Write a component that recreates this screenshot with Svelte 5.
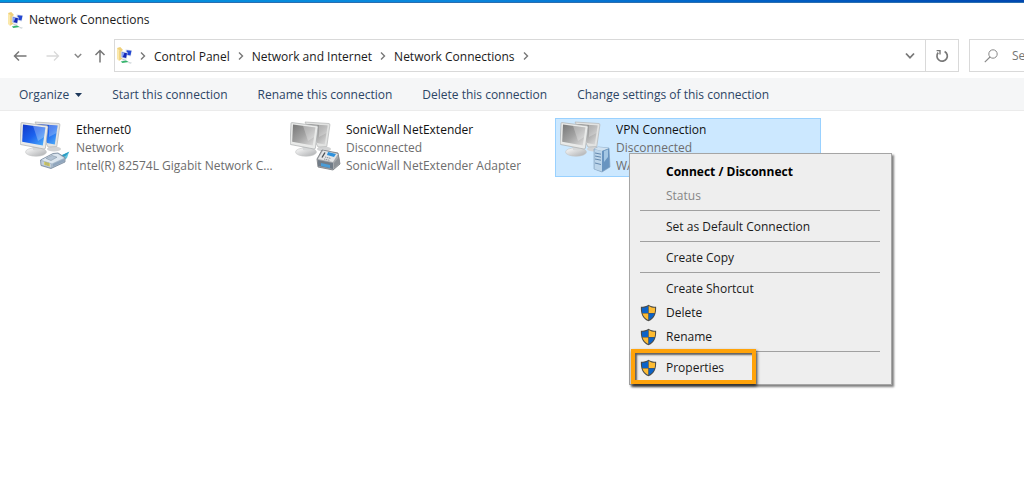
<script>
    const crumbs = ['Control Panel', 'Network and Internet', 'Network Connections'];

    const commands = [
        'Start this connection',
        'Rename this connection',
        'Delete this connection',
        'Change settings of this connection'
    ];

    const connections = [
        { name: 'Ethernet0', status: 'Network', device: 'Intel(R) 82574L Gigabit Network Connection', kind: 'plug', online: true },
        { name: 'SonicWall NetExtender', status: 'Disconnected', device: 'SonicWall NetExtender Adapter', kind: 'phone', online: false },
        { name: 'VPN Connection', status: 'Disconnected', device: 'WAN Miniport', kind: 'server', online: false }
    ];

    const menu = [
        { label: 'Connect / Disconnect', bold: true },
        { label: 'Status', disabled: true },
        { separator: true },
        { label: 'Set as Default Connection' },
        { separator: true },
        { label: 'Create Copy' },
        { separator: true },
        { label: 'Create Shortcut' },
        { label: 'Delete', shield: true },
        { label: 'Rename', shield: true },
        { separator: true },
        { label: 'Properties', shield: true, marked: true }
    ];

    let selected = $state('VPN Connection');
</script>

{#snippet folderIcon()}
    <svg class="folder-icon" viewBox="0 0 16 16" aria-hidden="true">
        <path d="M1 1 L4 0 L6 2 L6 11 L3 13 L1 11Z" fill="#efd07a" />
        <path d="M1 1 L3 3 L3 13 L1 11Z" fill="#fbe9ae" />
        <path d="M9 2 L15 3 L14 9 L9 8Z" fill="#dde3ee" />
        <path d="M10 3 L14.6 3.6 L13.6 8 L10 7.4Z" fill="#2447d2" />
        <path d="M4.5 4 L11 5 L10 11.4 L4.5 10Z" fill="#d6ddeb" />
        <path d="M5.5 5 L10.4 5.8 L9.5 10.4 L5.5 9.4Z" fill="#1327b8" />
        <path d="M5.5 5 L8 5.4 L6.4 9.4 L5.5 9.2Z" fill="#8aa4f4" />
        <path d="M6 11 L10 12 L9 13 L6 12.4Z" fill="#c3cad2" />
        <path d="M4.5 13.6 L9.5 12.8 L12 14.2 L6 15Z" fill="#35b46c" />
        <path d="M12 14.4 L15 14.8 L14 15.5 L11.5 15Z" fill="#b9c2c9" />
    </svg>
{/snippet}

{#snippet chevron()}
    <svg class="chevron" viewBox="0 0 6 10" aria-hidden="true">
        <path d="M1 1.5 L4.5 5 L1 8.5" fill="none" stroke="#777" stroke-width="1.4" />
    </svg>
{/snippet}

{#snippet shieldIcon()}
    <svg class="shield" viewBox="0 0 16 17" aria-hidden="true">
        <path d="M8 .6 C6 2 3.6 2.6 .8 2.6 C.6 9 2 13.5 8 16.4 C14 13.5 15.4 9 15.2 2.6 C12.4 2.6 10 2 8 .6Z" fill="#4c4c48" />
        <path d="M7.8 1.8 C6 3 4 3.5 1.8 3.6 C1.7 5.5 1.8 7.2 2.2 8.6 L7.8 8.6Z" fill="#0c63c8" />
        <path d="M8.2 1.8 C10 3 12 3.5 14.2 3.6 C14.3 5.5 14.2 7.2 13.8 8.6 L8.2 8.6Z" fill="#fdbb32" />
        <path d="M2.3 9 L7.8 9 L7.8 15.2 C4.8 13.7 3.2 11.8 2.3 9Z" fill="#fdbb32" />
        <path d="M13.7 9 L8.2 9 L8.2 15.2 C11.2 13.7 12.8 11.8 13.7 9Z" fill="#0c63c8" />
    </svg>
{/snippet}

{#snippet connectionIcon(kind, online)}
    <svg class="connection-icon" viewBox="0 0 52 54" aria-hidden="true">
        <defs>
            <linearGradient id="screen-{kind}" x1="0" y1="0" x2="1" y2="1">
                <stop offset="0" stop-color={online ? '#1238c8' : '#777777'} />
                <stop offset=".5" stop-color={online ? '#1c62ee' : '#a2a2a2'} />
                <stop offset="1" stop-color={online ? '#52b4fa' : '#e0e0e0'} />
            </linearGradient>
            <linearGradient id="base-{kind}" x1="0" y1="0" x2="1" y2="1">
                <stop offset="0" stop-color="#ffffff" />
                <stop offset="1" stop-color="#a9abad" />
            </linearGradient>
        </defs>
        <ellipse cx="34" cy="29" rx="7" ry="2.5" fill="#d2d3d4" />
        <path d="M15 2 L39 3.5 Q40 3.6 39.9 5 L36.8 26.5 L28 27Z" fill="#e2e3e2" stroke="#b3b5b5" stroke-width=".7" />
        <path d="M17 4 L37.6 5.5 L34.8 24.5 L27 23Z" fill="url(#screen-{kind})" />
        <path d="M29 5 L37.6 5.5 L36.6 13 L29 17Z" fill="#ffffff" opacity=".25" />
        <path d="M13 26 L21 28 L21 32 L12 31Z" fill="#babdbf" />
        <ellipse cx="16" cy="32" rx="10.5" ry="4.2" fill="url(#base-{kind})" stroke="#c2c4c5" stroke-width=".6" />
        <path d="M13 26 L21 28 L20 31 L13 30Z" fill="#d5d7d8" />
        <path d="M2 2.6 L27 5.8 Q28.2 6 28 7.2 L25.4 28 Q25.2 29.2 24 29 L1 24.6 Q0 24.4 .1 23.4 L1 3.6 Q1 2.5 2 2.6Z" fill="#e9eae9" stroke="#a9acad" stroke-width=".7" />
        <path d="M3 4.5 L25.4 7.5 L22.8 25.4 L2.2 21.8Z" fill="url(#screen-{kind})" />
        <path d="M13 5.8 L25.4 7.5 L24.1 17 L18 21 Z" fill="#ffffff" opacity=".28" />
        {#if kind === 'plug'}
            <path d="M38 37 L49 32 L47 38 L42 42Z" fill="#63c4de" />
            <path d="M40 36 L49.5 31.6 L46 35.5 L41 38Z" fill="#2a9cc4" />
            <path d="M20.5 40 L33 33.5 L38 33 L45 37.5 L45 42 L31 48.5 L21 45.5Z" fill="#a7b8c9" stroke="#75869a" stroke-width=".8" />
            <path d="M21.5 40 L33 34.2 L37.6 33.8 L44 38 L32 43.4Z" fill="#dce6ef" />
            <path d="M26 38.4 L32 35.4 L37 37.2 L31 40.6Z" fill="#b3c3d4" stroke="#7c8e9f" stroke-width=".5" />
            <path d="M33 44 L44 39 L44 41.5 L33 46.6Z" fill="#8fa5bd" />
            <path d="M21.4 41 L31 44 L31 47.6 L21.6 44.8Z" fill="#c3cfdb" />
            <path d="M24 41.4 L30 43.2 L30 46.6 L24 44.8Z" fill="#d5cf72" />
            <path d="M26 42 V45.4 M28 42.6 V46" stroke="#8b8b58" stroke-width=".6" />
        {:else if kind === 'phone'}
            <path d="M27 39 L32 30 L48 33 L50 44 L43 50 L28 47Z" fill="#a6a9ad" stroke="#73777c" stroke-width=".8" />
            <path d="M28 39 L33 30.5 L48 34 L43 42Z" fill="#e4e5e6" />
            <path d="M28 40 L43 43 L43 49 L28 46Z" fill="#707b87" />
            <path d="M31 43 L40 45 L40 48 L31 46Z" fill="#4a9dd8" />
            <path d="M38 32 L46 34 L44 37 L37 35Z" fill="#2d91dc" />
            <path d="M32 37.5 L35 32.5" stroke="#4b4f54" stroke-width="1.4" />
            <path d="M35 37 L41 38.5 M34 39 L40 40.5" stroke="#8c9197" stroke-width="1" stroke-dasharray="1.4 .7" />
            <path d="M44 43 L49 37 L50 43 L44 48Z" fill="#8d9196" />
        {:else}
            <path d="M34 29 L38 27 L49 28 L50 47 L42 52 L34 49Z" fill="#8aaccb" stroke="#7d9cba" stroke-width=".6" />
            <path d="M34 29 L38 27 L49 28 L42 31Z" fill="#d0e2f1" />
            <path d="M42 31 L49 28.5 L49.5 47 L42 51.5Z" fill="#6894c0" />
            <path d="M44 31 L48 29.5 L48 37 L44 42Z" fill="#b3d3ec" opacity=".8" />
            <path d="M34.5 29.5 L42 31 L42 51.5 L34.5 49Z" fill="#bcd5ea" />
            <path d="M35 33 L41 34.2 M35 36 L41 37.2 M35 39 L41 40.2 M35 43 L41 44.5" stroke="#6489ae" stroke-width="1" />
        {/if}
    </svg>
{/snippet}

<div class="window">
    <!-- Title bar -->
    <header class="title-bar">
        {@render folderIcon()}
        <span>Network Connections</span>
    </header>

    <!-- Navigation row -->
    <nav class="nav-row">
        <div class="nav-buttons">
            <button aria-label="Back">
                <svg width="14" height="14" viewBox="0 0 14 14"><path d="M13.5 7 H1.5 M6 2.5 L1.5 7 L6 11.5" fill="none" stroke="#777" stroke-width="1.5" /></svg>
            </button>
            <button class="forward" aria-label="Forward">
                <svg width="14" height="14" viewBox="0 0 14 14"><path d="M.5 7 H12.5 M8 2.5 L12.5 7 L8 11.5" fill="none" stroke="#d9d9d9" stroke-width="1.3" /></svg>
            </button>
            <button class="recent" aria-label="Recent locations">
                <svg width="8" height="6" viewBox="0 0 8 6"><path d="M.8 1 L4 4.2 L7.2 1" fill="none" stroke="#888" stroke-width="1.5" /></svg>
            </button>
            <button class="up" aria-label="Up">
                <svg width="12" height="14" viewBox="0 0 12 14"><path d="M6 13.5 V1.5 M1.5 6 L6 1.5 L10.5 6" fill="none" stroke="#777" stroke-width="1.5" /></svg>
            </button>
        </div>

        <div class="address">
            {@render folderIcon()}
            <div class="crumbs">
                {@render chevron()}
                {#each crumbs as crumb}
                    <a href="#top">{crumb}</a>
                    {@render chevron()}
                {/each}
            </div>
            <button class="history" aria-label="Previous locations">
                <svg width="10" height="8" viewBox="0 0 10 8"><path d="M1 1.5 L5 5.8 L9 1.5" fill="none" stroke="#777" stroke-width="1.8" /></svg>
            </button>
            <button class="refresh" aria-label="Refresh">
                <svg width="14" height="14" viewBox="0 0 14 14">
                    <path d="M9.6 2.4 A5.2 5.2 0 1 1 3.2 3.6" fill="none" stroke="#777" stroke-width="1.7" />
                    <path d="M1.6 1.6 H5 V5.4" fill="none" stroke="#777" stroke-width="1.4" />
                </svg>
            </button>
        </div>

        <div class="search">
            <svg width="14" height="14" viewBox="0 0 14 14" aria-hidden="true">
                <circle cx="9" cy="5" r="4.2" fill="none" stroke="#888" stroke-width="1" />
                <path d="M6 8 L.8 13.2" stroke="#888" stroke-width="1.1" />
            </svg>
            <input type="text" aria-label="Search" placeholder="Search" />
        </div>
    </nav>

    <!-- Command bar -->
    <div class="command-bar">
        <button>
            Organize
            <svg width="7" height="4" viewBox="0 0 7 4" aria-hidden="true"><path d="M0 0 H7 L3.5 4Z" fill="#1e395b" /></svg>
        </button>
        {#each commands as command}
            <button>{command}</button>
        {/each}
    </div>

    <!-- Connections -->
    <main class="connections">
        {#each connections as c}
            <div class="slot">
                <button class="connection" class:selected={c.name === selected} onclick={() => (selected = c.name)}>
                    {@render connectionIcon(c.kind, c.online)}
                    <span class="details">
                        <span class="name">{c.name}</span>
                        <span>{c.status}</span>
                        <span>{c.device}</span>
                    </span>
                </button>

                {#if c.name === selected}
                    <div class="context-menu" role="menu">
                        {#each menu as item}
                            {#if item.separator}
                                <hr />
                            {:else}
                                <button role="menuitem" class:bold={item.bold} class:marked={item.marked} disabled={item.disabled}>
                                    <span class="menu-icon">
                                        {#if item.shield}{@render shieldIcon()}{/if}
                                    </span>
                                    {item.label}
                                </button>
                            {/if}
                        {/each}
                    </div>
                {/if}
            </div>
        {/each}
    </main>
</div>

<style>
    :global(body) { background: #fff; }

    .window {
        min-height: 100vh;
        box-sizing: border-box;
        overflow: hidden;
        font-family: "Open Sans", "Noto Sans", sans-serif;
        font-size: 12px;
        line-height: 18px;
        color: #1a1a1a;
    }

    .window::before {
        content: "";
        display: block;
        height: 2px;
        background: linear-gradient(90deg, #0093dd, #0a86dc 45%, #0064c8 70%, #0048b0);
        border-bottom: 1px solid #2a6eb0;
    }

    button {
        display: flex;
        align-items: center;
        margin: 0;
        padding: 0;
        border: none;
        background: none;
        font: inherit;
        color: inherit;
        text-align: left;
        white-space: nowrap;
    }

    svg { flex: none; display: block; }

    .folder-icon { width: 17px; height: 17px; }

    /* Title bar */
    .title-bar {
        display: flex;
        align-items: center;
        gap: 5px;
        height: 34px;
        padding: 0 7px 2px;
    }

    /* Navigation row */
    .nav-row {
        display: flex;
        height: 33px;
        margin-bottom: 6px;
    }

    .nav-buttons {
        display: flex;
        align-items: center;
        padding: 0 8px 0 13px;
    }

    .forward { margin-left: 19px; }
    .recent  { margin-left: 14px; }
    .up      { margin-left: 12px; }

    .address {
        display: flex;
        flex: 1;
        align-items: center;
        min-width: 0;
        padding-left: 1px;
        border: 1px solid #d9d9d9;
    }

    .crumbs {
        display: flex;
        flex: 1;
        align-items: center;
        gap: 8px;
        padding-left: 7px;
    }

    .crumbs a { padding-top: 2px; color: inherit; text-decoration: none; white-space: nowrap; }

    .chevron { width: 6px; height: 10px; }

    .history { padding: 0 10px; }

    .refresh {
        align-self: stretch;
        padding: 0 9px;
        border-left: 1px solid #d9d9d9;
    }

    .search {
        display: flex;
        align-items: center;
        gap: 14px;
        width: 40px;
        margin-left: 10px;
        padding-left: 14px;
        border: 1px solid #d9d9d9;
        border-right: none;
    }

    .search input {
        flex: 1;
        min-width: 0;
        padding: 0;
        border: none;
        outline: none;
        font: inherit;
        background: none;
    }

    .search input::placeholder { color: #757575; }

    /* Command bar */
    .command-bar {
        display: flex;
        gap: 30px;
        height: 30px;
        padding: 2px 0 0 19px;
        background: #f5f6f7;
        border-bottom: 1px solid #ebebeb;
        color: #2c4565;
    }

    .command-bar svg { margin-left: 6px; }

    /* Connections */
    .connections {
        display: flex;
        flex-wrap: wrap;
        gap: 4px;
        padding: 7px 15px;
    }

    .slot { position: relative; width: 266px; }

    .connection {
        align-items: flex-start;
        gap: 4px;
        width: 100%;
        box-sizing: border-box;
        padding: 1px 4px;
        border: 1px solid transparent;
    }

    .connection.selected { background: #cce8ff; border-color: #99d1ff; }

    .connection-icon { width: 52px; height: 54px; }

    .details {
        display: flex;
        flex-direction: column;
        min-width: 0;
        padding-top: 1px;
        color: #6d6d6d;
    }

    .details span { overflow: hidden; text-overflow: ellipsis; }
    .details .name { color: #111; }

    /* Context menu opened over the selected connection */
    .context-menu {
        position: absolute;
        top: 35px;
        left: 74px;
        z-index: 1;
        width: 263px;
        box-sizing: border-box;
        padding: 5px 1px;
        background: #eee;
        border: 1px solid #a5a5a5;
        box-shadow: 2px 2px 2px rgba(0, 0, 0, 0.5);
    }

    .context-menu button {
        position: relative;
        width: 100%;
        height: 24px;
        padding-top: 2px;
    }

    .context-menu button:disabled { color: #868686; }
    .context-menu .bold { font-weight: 700; color: #000; }

    .menu-icon { width: 26px; padding-left: 9px; }

    .shield { width: 17px; height: 18px; }

    .context-menu hr {
        height: 1px;
        margin: 3px 10px 3px 9px;
        border: none;
        background: #a0a0a0;
    }

    .marked::after {
        content: "";
        position: absolute;
        top: -6px;
        left: 0;
        width: 117px;
        height: 27px;
        border: 4px solid #ffa30a;
        box-shadow: 1px 2px 3px rgba(0, 0, 0, 0.8), inset 2px 2px 2px rgba(0, 0, 0, 0.6);
    }
</style>
